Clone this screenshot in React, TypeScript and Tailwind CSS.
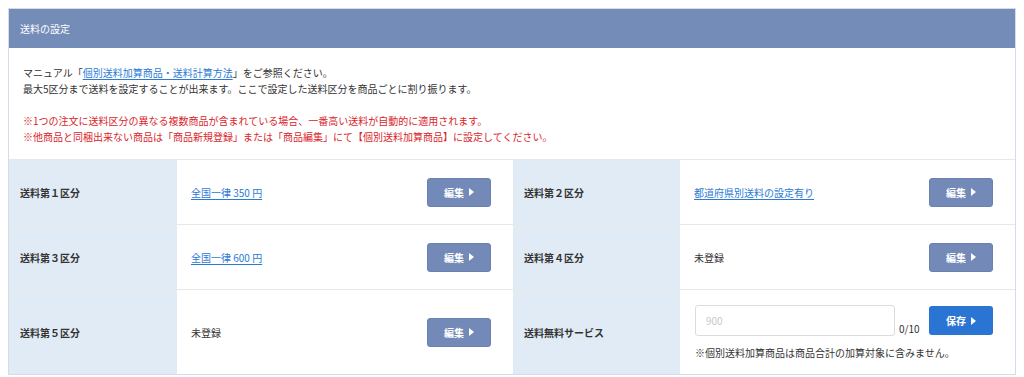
import React from "react";

const font = { fontFamily: '"Noto Sans CJK JP", "Noto Sans", sans-serif' };

function Tri() {
  return (
    <svg width="5" height="8" viewBox="0 0 5 8" className="ml-[5px]">
      <path d="M0 0 L5 4 L0 8 Z" fill="white" />
    </svg>
  );
}

function EditBtn() {
  return (
    <button className="flex h-[29px] w-[64px] items-center justify-center rounded-[3px] border border-[#6b82b0] bg-[#7389b8] text-[10px] font-bold text-white">
      編集
      <Tri />
    </button>
  );
}

function Label({ children }: { children: React.ReactNode }) {
  return (
    <div className="flex items-center bg-[#e1ebf5] pl-[11px] text-[10px] font-bold text-[#333]">
      {children}
    </div>
  );
}

function Value({ children, link }: { children: React.ReactNode; link?: boolean }) {
  return (
    <div className="flex items-center justify-between bg-white pl-[14px] pr-[22px]">
      {link ? (
        <a className="text-[10px] text-[#2a7ad4] underline underline-offset-2">{children}</a>
      ) : (
        <span className="text-[10px] text-[#333]">{children}</span>
      )}
      <EditBtn />
    </div>
  );
}

export default function App() {
  return (
    <div className="bg-white p-2" style={font}>
      <div className="border border-[#d3dcea]">
        <div className="flex h-[39px] items-center bg-[#738cb8] pl-[11px] text-[10px] text-white">
          送料の設定
        </div>
        <div className="pb-[14px] pl-[14px] pt-[17px] text-[10px] leading-[16px] text-[#333]">
          <p>
            マニュアル「<a className="text-[#2a7ad4] underline underline-offset-2">個別送料加算商品・送料計算方法</a>」をご参照ください。
          </p>
          <p>最大5区分まで送料を設定することが出来ます。ここで設定した送料区分を商品ごとに割り振ります。</p>
          <p className="mt-[16px] text-[#d9262c]">※1つの注文に送料区分の異なる複数商品が含まれている場合、一番高い送料が自動的に適用されます。</p>
          <p className="text-[#d9262c]">※他商品と同梱出来ない商品は「商品新規登録」または「商品編集」にて【個別送料加算商品】に設定してください。</p>
        </div>
        <div className="grid grid-cols-[168px_336px_167px_1fr] border-t border-[#e8e8e8]">
          <div className="contents">
            <div className="col-span-4 grid h-[64px] grid-cols-subgrid">
              <Label>送料第１区分</Label>
              <Value link>全国一律 350 円</Value>
              <Label>送料第２区分</Label>
              <Value link>都道府県別送料の設定有り</Value>
            </div>
            <div className="col-span-4 grid h-[65px] grid-cols-subgrid border-t border-[#e8e8e8]">
              <Label>送料第３区分</Label>
              <Value link>全国一律 600 円</Value>
              <Label>送料第４区分</Label>
              <Value>未登録</Value>
            </div>
            <div className="col-span-4 grid h-[85px] grid-cols-subgrid border-t border-[#e8e8e8]">
              <Label>送料第５区分</Label>
              <Value>未登録</Value>
              <Label>送料無料サービス</Label>
              <div className="flex flex-col bg-white pl-[15px] pr-[22px] pt-[15px]">
                <div className="flex items-end">
                  <input
                    placeholder="900"
                    className="h-[31px] w-[200px] rounded-[3px] border border-[#dcdcdc] px-[10px] text-[10px] text-[#333] placeholder:text-[#c8c8c8] outline-none"
                    style={font}
                  />
                  <span className="ml-[4px] mb-[-1px] text-[10px] leading-[16px] text-[#333]">0/10</span>
                  <button className="ml-auto mb-[1px] flex h-[29px] w-[64px] items-center justify-center rounded-[3px] bg-[#2a74d4] text-[10px] font-bold text-white">
                    保存
                    <Tri />
                  </button>
                </div>
                <p className="mt-[10px] text-[10px] leading-[14px] text-[#333]">※個別送料加算商品は商品合計の加算対象に含みません。</p>
              </div>
            </div>
          </div>
        </div>
      </div>
    </div>
  );
}
